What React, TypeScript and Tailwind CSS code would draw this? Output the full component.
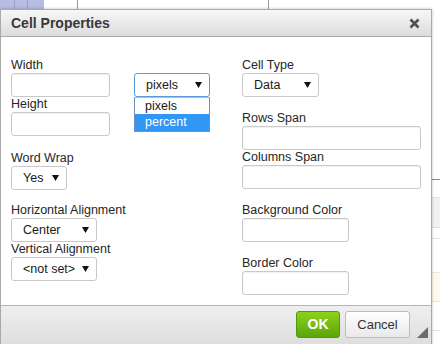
import React from 'react';

const Arrow = () => (
  <svg width="7" height="6" viewBox="0 0 7 6" className="shrink-0">
    <polygon points="0,0 7,0 3.5,6" fill="#111" />
  </svg>
);

const Label = ({ children }: { children: React.ReactNode }) => (
  <div className="h-[15px] leading-[15px] text-[#262626] whitespace-nowrap">{children}</div>
);

const Input = ({ width }: { width: string }) => (
  <div
    className={`${width} h-[24px] rounded-[3px] border border-[#c9c9c9] bg-white shadow-[inset_0_1px_1px_rgba(0,0,0,0.06)]`}
  />
);

interface SelectProps {
  value: string;
  width: string;
  focused?: boolean;
}

const Select: React.FC<SelectProps> = ({ value, width, focused }) => (
  <div
    className={`${width} h-[24px] rounded-[3px] border ${
      focused ? 'border-[#5a9ae0]' : 'border-[#c9c9c9]'
    } bg-white flex items-center justify-between pl-[11px] pr-[7px] text-[#1a1a1a]`}
  >
    <span className="leading-none">{value}</span>
    <Arrow />
  </div>
);

const Background = () => (
  <>
    <div className="absolute left-0 top-0 w-[44px] h-[9px] bg-[#b7bce2]" />
    <div className="absolute left-[14px] top-0 w-[1px] h-[9px] bg-[#9aa0cc]" />
    <div className="absolute left-[27px] top-0 w-[1px] h-[9px] bg-[#9aa0cc]" />
    <div className="absolute left-[77px] top-0 w-[1px] h-[9px] bg-[#9a9a9a]" />
    <div className="absolute left-[268px] top-0 w-[1px] h-[9px] bg-[#9a9a9a]" />
    <div className="absolute left-[432px] top-[179px] w-[8px] h-[1px] bg-[#8a8a8a]" />
    <div className="absolute left-[432px] top-[197px] w-[8px] h-[31px] bg-[#f1f1f1] border-y border-[#e2e2e2]" />
    <div className="absolute left-[432px] top-[238px] w-[8px] h-[1px] bg-[#e4e4e4]" />
    <div className="absolute left-[432px] top-[272px] w-[8px] h-[30px] bg-[#fdf9ec] border-y border-[#ece8dc]" />
    <div className="absolute left-[432px] top-[330px] w-[8px] h-[1px] bg-[#e4e4e4]" />
  </>
);

export default function App() {
  return (
    <div
      className="relative w-[440px] h-[344px] overflow-hidden bg-white text-[12.5px]"
      style={{ fontFamily: '"Liberation Sans", Arial, sans-serif' }}
    >
      <Background />

      <div className="absolute left-0 top-[9px] w-[432px] h-[345px] border border-[#a9a9a9] bg-white shadow-[0_0_3px_rgba(0,0,0,0.25)] flex flex-col">
        {/* header */}
        <div className="h-[27px] shrink-0 border-b border-[#a9a9a9] bg-gradient-to-b from-[#f7f7f7] to-[#dcdcdc] flex items-center justify-between pl-[10px] pr-[11px]">
          <span className="text-[14px] font-bold text-[#383838] leading-none">Cell Properties</span>
          <svg width="11" height="11" viewBox="0 0 11 11">
            <path d="M1.5 1.5 L9.5 9.5 M9.5 1.5 L1.5 9.5" stroke="#505050" strokeWidth="2.6" />
          </svg>
        </div>

        {/* body */}
        <div className="h-[268px] shrink-0 grid grid-cols-[231px_1fr] pl-[10px] pt-[21px]">
          <div className="flex flex-col">
            <Label>Width</Label>
            <div className="flex items-start gap-[24px]">
              <Input width="w-[99px]" />
              <div className="relative">
                <Select value="pixels" width="w-[76px]" focused />
                <div className="absolute left-0 top-[24px] w-[76px] border border-[#6d8fc4] border-t-[#a9bedf] bg-white z-10">
                  <div className="h-[16px] leading-[16px] pl-[10px] text-[#1a1a1a]">pixels</div>
                  <div className="h-[17px] leading-[17px] pl-[10px] bg-[#3296f4] text-white">percent</div>
                </div>
              </div>
            </div>
            <Label>Height</Label>
            <Input width="w-[99px]" />

            <div className="mt-[15px]">
              <Label>Word Wrap</Label>
              <Select value="Yes" width="w-[56px]" />
            </div>

            <div className="mt-[13px]">
              <Label>Horizontal Alignment</Label>
              <Select value="Center" width="w-[86px]" />
              <Label>Vertical Alignment</Label>
              <Select value="<not set>" width="w-[86px]" />
            </div>
          </div>

          <div className="flex flex-col">
            <Label>Cell Type</Label>
            <Select value="Data" width="w-[77px]" />

            <div className="mt-[14px]">
              <Label>Rows Span</Label>
              <Input width="w-[179px]" />
              <Label>Columns Span</Label>
              <Input width="w-[179px]" />
            </div>

            <div className="mt-[14px]">
              <Label>Background Color</Label>
              <Input width="w-[107px]" />
            </div>

            <div className="mt-[14px]">
              <Label>Border Color</Label>
              <Input width="w-[107px]" />
            </div>
          </div>
        </div>

        {/* footer */}
        <div className="relative flex-1 border-t border-[#b5b5b5] bg-gradient-to-b from-[#efefef] to-[#dadada] flex items-start justify-end gap-[5px] pt-[5px] pr-[21px]">
          <button className="w-[44px] h-[27px] rounded-[3px] border border-[#4f9a0c] bg-gradient-to-b from-[#8ed11c] to-[#5ba50a] text-white font-bold text-[14px]">
            OK
          </button>
          <button className="w-[65px] h-[27px] rounded-[3px] border border-[#bdbdbd] bg-gradient-to-b from-white to-[#e9e9e9] text-[#333] text-[13px]">
            Cancel
          </button>
          <svg width="11" height="11" viewBox="0 0 11 11" className="absolute left-[416px] top-[21px]">
            <polygon points="11,0 11,11 0,11" fill="#6b6b6b" />
          </svg>
        </div>
      </div>
    </div>
  );
}
